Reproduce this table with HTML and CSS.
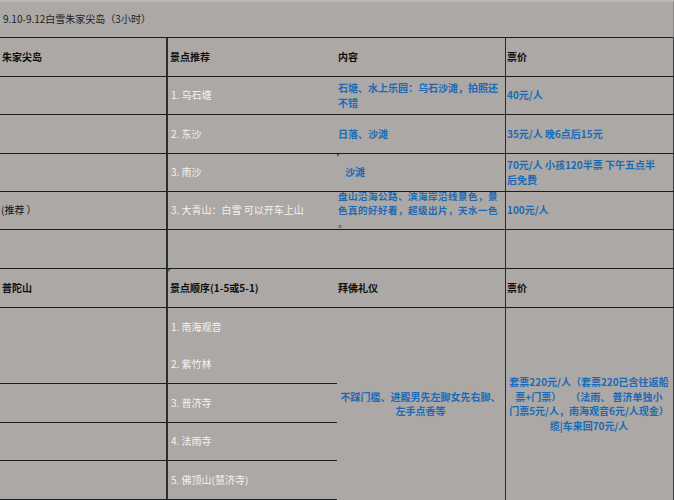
FILE: index.html
```html
<!DOCTYPE html>
<html lang="zh">
<head>
<meta charset="utf-8">
<title>白雪朱家尖岛</title>
<link rel="stylesheet" href="styles.css">
</head>
<body>
<div class="sheet">
  <div class="cell title">9.10-9.12白雪朱家尖岛（3小时）</div>

  <div class="cell c1 head">朱家尖岛</div>
  <div class="cell c2 head">景点推荐</div>
  <div class="cell c3 head">内容</div>
  <div class="cell c4 head">票价</div>

  <div class="cell c1"></div>
  <div class="cell c2 spot">1. 乌石塘</div>
  <div class="cell c3 blue">石塘、水上乐园：乌石沙滩，拍照还<br>不错</div>
  <div class="cell c4 blue">40元/人</div>

  <div class="cell c1"></div>
  <div class="cell c2 spot">2. 东沙</div>
  <div class="cell c3 blue">日落、沙滩</div>
  <div class="cell c4 blue">35元/人 晚6点后15元</div>

  <div class="cell c1"></div>
  <div class="cell c2 spot">3. 南沙</div>
  <div class="cell c3 blue flag indent">沙滩</div>
  <div class="cell c4 blue">70元/人 小孩120半票 下午五点半<br>后免费</div>

  <div class="cell c1 plain">(推荐 ）</div>
  <div class="cell c2 spot">3. 大青山：白雪 可以开车上山</div>
  <div class="cell c3 blue tight">盘山沿海公路、滨海岸沿线景色，景<br>色真的好好看，超级出片，天水一色<br>。</div>
  <div class="cell c4 blue">100元/人</div>

  <div class="cell c1"></div>
  <div class="cell c2"></div>
  <div class="cell c3"></div>
  <div class="cell c4"></div>

  <div class="cell c1 head">普陀山</div>
  <div class="cell c2 head flag">景点顺序(1-5或5-1)</div>
  <div class="cell c3 head">拜佛礼仪</div>
  <div class="cell c4 head">票价</div>

  <div class="cell c1 r9 open"></div>
  <div class="cell c2 r9 spot open">1. 南海观音</div>
  <div class="cell c3 merged blue center">不踩门槛、进殿男先左脚女先右脚、<br>左手点香等</div>
  <div class="cell c4 merged blue center">套票220元/人（套票220已含往返船<br>票+门票）&nbsp;&nbsp;&nbsp;&nbsp;（法雨、 普济单独小<br>门票5元/人，南海观音6元/人现金）<br>缆|车来回70元/人</div>

  <div class="cell c1 r10"></div>
  <div class="cell c2 r10 spot">2. 紫竹林</div>

  <div class="cell c1 r11"></div>
  <div class="cell c2 r11 spot">3. 普济寺</div>

  <div class="cell c1 r12"></div>
  <div class="cell c2 r12 spot">4. 法雨寺</div>

  <div class="cell c1 r13"></div>
  <div class="cell c2 r13 spot">5. 佛顶山(慧济寺)</div>
</div>
</body>
</html>
```

FILE: styles.css
```css
html, body {
  margin: 0;
  padding: 0;
  background: #aba8a6;
}

.sheet {
  width: 674px;
  height: 500px;
  display: grid;
  grid-template-columns: 168px 169px 168px 169px;
  grid-template-rows: 38px 39px 38px 39px 38px 38px 39px 39px 38px 38px 39px 38px 39px;
  font-family: "Noto Sans CJK SC", "DejaVu Sans", sans-serif;
  font-size: 10px;
  line-height: 14.5px;
  color: #111;
  overflow: hidden;
}

.cell {
  box-sizing: border-box;
  display: flex;
  flex-direction: column;
  justify-content: center;
  align-items: flex-start;
  padding: 0 2px;
  white-space: nowrap;
  border-bottom: 1px solid #1c1c1c;
  position: relative;
}

.title {
  grid-column: 1 / 5;
  border-top: 2px solid #bbb8b6;
  border-right: 1px solid #8d8a88;
  padding-left: 3px;
  color: #222;
}

.c1 { grid-column: 1; border-right: 2px solid #2e2e2e; }
.c2 { grid-column: 2; }
.c3 { grid-column: 3; padding-left: 1px; }
.c4 { grid-column: 4; border-left: 1px solid #2a2a2a; border-right: 1px solid #3a3a3a; padding-left: 1px; }

.head {
  font-weight: 700;
  color: #0e0e0e;
}

.spot {
  color: #f6f2ef;
  padding-left: 3px;
}

.plain { color: #151515; padding-left: 1px; }

.blue {
  color: #1b6ab6;
  font-weight: 700;
}

.indent { padding-left: 8px; }

.tight {
  font-size: 9.5px;
  letter-spacing: 0.5px;
  line-height: 13.8px;
}

.r9 { grid-row: 9; }
.r10 { grid-row: 10; }
.r11 { grid-row: 11; }
.r12 { grid-row: 12; }
.r13 { grid-row: 13; }

.open { border-bottom: none; }

.merged {
  grid-row: 9 / 14;
  border-bottom: none;
}

.c3.merged { grid-column: 3; }
.c4.merged { grid-column: 4; }

.center {
  align-items: center;
  text-align: center;
}

.flag::before {
  content: "";
  position: absolute;
  left: 0;
  top: 0;
  width: 0;
  height: 0;
  border-top: 3px solid #2f7a2f;
  border-right: 3px solid transparent;
}
```
